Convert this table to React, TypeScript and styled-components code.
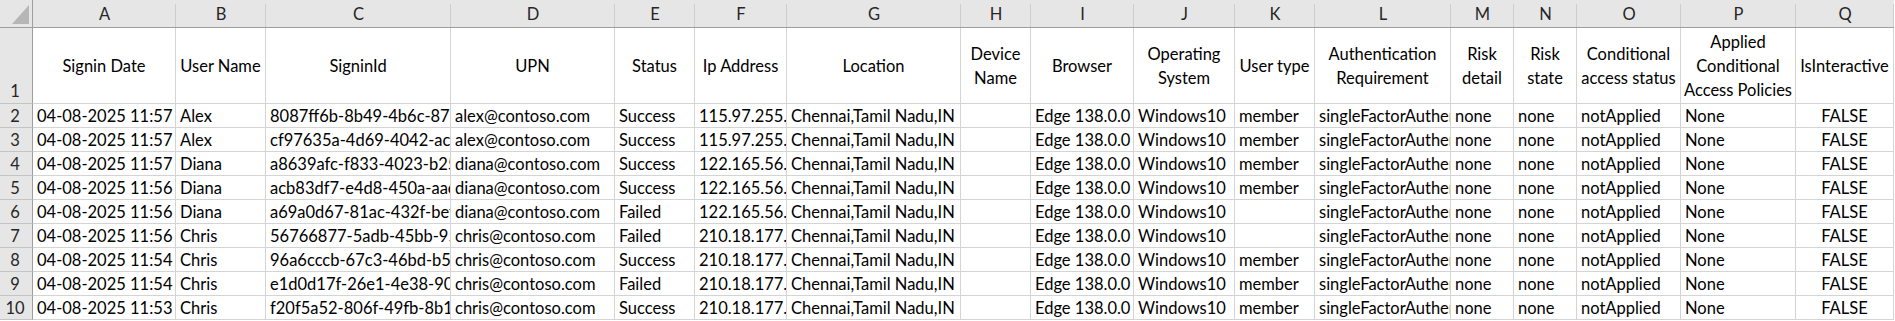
import styled, { createGlobalStyle } from "styled-components";

const GlobalStyle = createGlobalStyle`
  html, body {
    margin: 0;
    padding: 0;
    background: #ffffff;
  }
`;

const FONT = `Lato, "Noto Sans", "Liberation Sans", sans-serif`;

const colWidths = [143, 90, 185, 164, 80, 92, 174, 70, 103, 101, 80, 136, 63, 63, 104, 115, 98];
const letters = "ABCDEFGHIJKLMNOPQ".split("");

const Sheet = styled.div`
  display: grid;
  grid-template-columns: 33px ${colWidths.map((w) => `${w}px`).join(" ")};
  grid-template-rows: 28px 76px repeat(9, 24px);
  font-family: ${FONT};
  font-size: 16.5px;
  color: #000;
  width: 1894px;
`;

const Corner = styled.div`
  background: #e6e6e6;
  border-right: 1px solid #9e9e9e;
  border-bottom: 1px solid #9e9e9e;
  box-sizing: border-box;
  display: flex;
  align-items: flex-end;
  justify-content: flex-end;
  padding: 0 3px 3px 0;
`;

const ColHead = styled.div`
  background: #e6e6e6;
  border-bottom: 1px solid #9e9e9e;
  box-sizing: border-box;
  display: flex;
  align-items: center;
  justify-content: center;
  color: #262626;
  position: relative;
  padding-top: 1px;

  &::after {
    content: "";
    position: absolute;
    right: 0;
    top: 4px;
    bottom: 0;
    width: 1px;
    background: #cdcdcd;
  }
`;

const RowHead = styled.div<{ $tall?: boolean }>`
  background: #e6e6e6;
  border-right: 1px solid #9e9e9e;
  border-bottom: 1px solid #c4c4c4;
  box-sizing: border-box;
  display: flex;
  align-items: ${(p) => (p.$tall ? "flex-end" : "center")};
  justify-content: center;
  color: #262626;
  padding-bottom: ${(p) => (p.$tall ? "2px" : "0")};
  padding-right: 2px;
`;

const HeaderCell = styled.div`
  border-right: 1px solid #d4d4d4;
  border-bottom: 1px solid #d4d4d4;
  box-sizing: border-box;
  display: flex;
  align-items: center;
  justify-content: center;
  text-align: center;
  line-height: 24px;
  padding: 0 2px;
  overflow: hidden;
`;

const Cell = styled.div<{ $align?: "left" | "right" | "center" }>`
  border-right: 1px solid #d4d4d4;
  border-bottom: 1px solid #d4d4d4;
  box-sizing: border-box;
  white-space: nowrap;
  overflow: hidden;
  text-align: ${(p) => p.$align ?? "left"};
  padding: 0 4px;
  line-height: 22px;
  padding-top: 1px;
`;

const headers = [
  "Signin Date",
  "User Name",
  "SigninId",
  "UPN",
  "Status",
  "Ip Address",
  "Location",
  "Device Name",
  "Browser",
  "Operating System",
  "User type",
  "Authentication Requirement",
  "Risk detail",
  "Risk state",
  "Conditional access status",
  "Applied Conditional Access Policies",
  "IsInteractive",
];

type Row = [string, string, string, string, string, string, string];

// date, name, signinId, upn, status, ip, userType
const rows: Row[] = [
  ["04-08-2025 11:57", "Alex", "8087ff6b-8b49-4b6c-87b4", "alex@contoso.com", "Success", "115.97.255.4", "member"],
  ["04-08-2025 11:57", "Alex", "cf97635a-4d69-4042-ac51", "alex@contoso.com", "Success", "115.97.255.4", "member"],
  ["04-08-2025 11:57", "Diana", "a8639afc-f833-4023-b251", "diana@contoso.com", "Success", "122.165.56.4", "member"],
  ["04-08-2025 11:56", "Diana", "acb83df7-e4d8-450a-aac1", "diana@contoso.com", "Success", "122.165.56.4", "member"],
  ["04-08-2025 11:56", "Diana", "a69a0d67-81ac-432f-bef1", "diana@contoso.com", "Failed", "122.165.56.4", ""],
  ["04-08-2025 11:56", "Chris", "56766877-5adb-45bb-95a1", "chris@contoso.com", "Failed", "210.18.177.4", ""],
  ["04-08-2025 11:54", "Chris", "96a6cccb-67c3-46bd-b541", "chris@contoso.com", "Success", "210.18.177.4", "member"],
  ["04-08-2025 11:54", "Chris", "e1d0d17f-26e1-4e38-9021", "chris@contoso.com", "Failed", "210.18.177.4", "member"],
  ["04-08-2025 11:53", "Chris", "f20f5a52-806f-49fb-8b14", "chris@contoso.com", "Success", "210.18.177.4", "member"],
];

const App = () => {
  return (
    <>
      <GlobalStyle />
      <Sheet>
        <Corner>
          <svg width="17" height="19" viewBox="0 0 17 19">
            <polygon points="17,0 17,19 0,19" fill="#b6b6b6" />
          </svg>
        </Corner>
        {letters.map((l) => (
          <ColHead key={l}>{l}</ColHead>
        ))}

        <RowHead $tall>1</RowHead>
        {headers.map((h) => (
          <HeaderCell key={h}>{h}</HeaderCell>
        ))}

        {rows.map((r, i) => (
          <Row key={i} n={i + 2} data={r} />
        ))}
      </Sheet>
    </>
  );
};

const Row = ({ n, data }: { n: number; data: Row }) => {
  const [date, name, id, upn, status, ip, userType] = data;
  return (
    <>
      <RowHead>{n}</RowHead>
      <Cell $align="right">{date}</Cell>
      <Cell>{name}</Cell>
      <Cell>{id}</Cell>
      <Cell>{upn}</Cell>
      <Cell>{status}</Cell>
      <Cell>{ip}</Cell>
      <Cell>Chennai,Tamil Nadu,IN</Cell>
      <Cell />
      <Cell>Edge 138.0.0</Cell>
      <Cell>Windows10</Cell>
      <Cell>{userType}</Cell>
      <Cell>singleFactorAuthentication</Cell>
      <Cell>none</Cell>
      <Cell>none</Cell>
      <Cell>notApplied</Cell>
      <Cell>None</Cell>
      <Cell $align="center">FALSE</Cell>
    </>
  );
};

export default App;
